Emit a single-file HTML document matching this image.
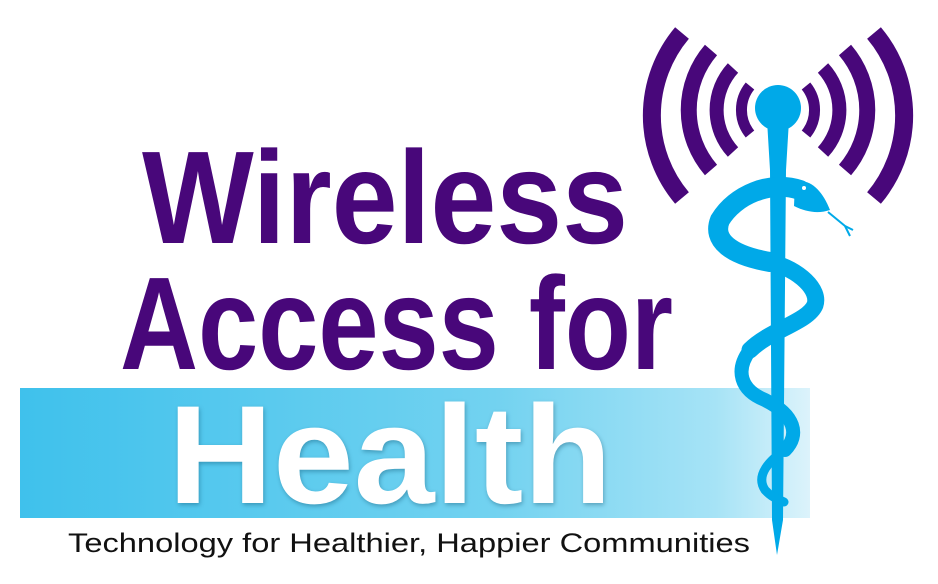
<!DOCTYPE html>
<html><head><meta charset="utf-8"><style>
html,body{margin:0;padding:0;background:#fff;width:938px;height:584px;overflow:hidden}
svg{display:block}
</style></head><body>
<svg width="938" height="584" viewBox="0 0 938 584" xmlns="http://www.w3.org/2000/svg">
<defs>
<linearGradient id="bar" x1="0" x2="1" y1="0" y2="0">
<stop offset="0" stop-color="#3fc1ec"/>
<stop offset="0.6" stop-color="#72d2f0"/>
<stop offset="0.88" stop-color="#a6e3f6"/>
<stop offset="1" stop-color="#dcf3fb"/>
</linearGradient>
</defs>
<rect x="20" y="388" width="790" height="130" fill="url(#bar)"/>
<text x="142" y="243" font-family="Liberation Sans, sans-serif" font-weight="bold" font-size="132" fill="#48077a" textLength="486" lengthAdjust="spacingAndGlyphs">Wireless</text>
<text x="120" y="369" font-family="Liberation Sans, sans-serif" font-weight="bold" font-size="132" fill="#48077a" textLength="553" lengthAdjust="spacingAndGlyphs">Access for</text>
<text x="168" y="503" font-family="Liberation Sans, sans-serif" font-weight="bold" font-size="140" fill="#fff" textLength="444" lengthAdjust="spacingAndGlyphs" style="filter:drop-shadow(1px 2px 2px rgba(0,60,90,0.35))">Health</text>
<text x="68" y="552" font-family="Liberation Sans, sans-serif" font-size="27" fill="#111" textLength="682" lengthAdjust="spacingAndGlyphs">Technology for Healthier, Happier Communities</text>
<!-- radio arcs -->
<g fill="none" stroke="#48077a" stroke-linecap="butt">
<path d="M750,86 A38,38 0 0 0 750,134" stroke-width="11"/>
<path d="M806,86 A38,38 0 0 1 806,134" stroke-width="11"/>
<path d="M733,68 A62,62 0 0 0 733,152" stroke-width="14"/>
<path d="M823,68 A62,62 0 0 1 823,152" stroke-width="14"/>
<path d="M711,50 A92,92 0 0 0 711,170" stroke-width="16"/>
<path d="M845,50 A92,92 0 0 1 845,170" stroke-width="16"/>
<path d="M682,33 A128,128 0 0 0 682,198" stroke-width="18"/>
<path d="M874,33 A128,128 0 0 1 874,198" stroke-width="18"/>
</g>
<!-- rod -->
<circle cx="778" cy="108" r="23" fill="#00a9e8"/>
<path d="M767,120 L789,120 L786,170 L783,520 L777,555 L772,520 L770,170 Z" fill="#00a9e8"/>
<!-- snake -->
<g fill="none" stroke="#00a9e8" stroke-linecap="round">
<path d="M800,190 C770,180 735,195 720,220 C712,240 730,255 770,262" stroke-width="20"/>
<path d="M770,262 C800,270 820,290 815,305 C808,322 770,330 750,350" stroke-width="17"/>
<path d="M750,350 C735,370 740,390 765,400 C795,415 800,435 785,450" stroke-width="14"/>
<path d="M785,450 C770,460 755,475 765,490 C772,498 780,500 784,502" stroke-width="9"/>
</g>
<path d="M795,182 C810,178 822,190 830,210 C818,214 806,212 794,206 Z" fill="#00a9e8"/>
<circle cx="804" cy="188" r="2" fill="#fff"/>
<path d="M828,212 L845,226 L850,236 M845,226 L853,230" stroke="#00a9e8" stroke-width="2" fill="none"/>
</svg>
</body></html>
